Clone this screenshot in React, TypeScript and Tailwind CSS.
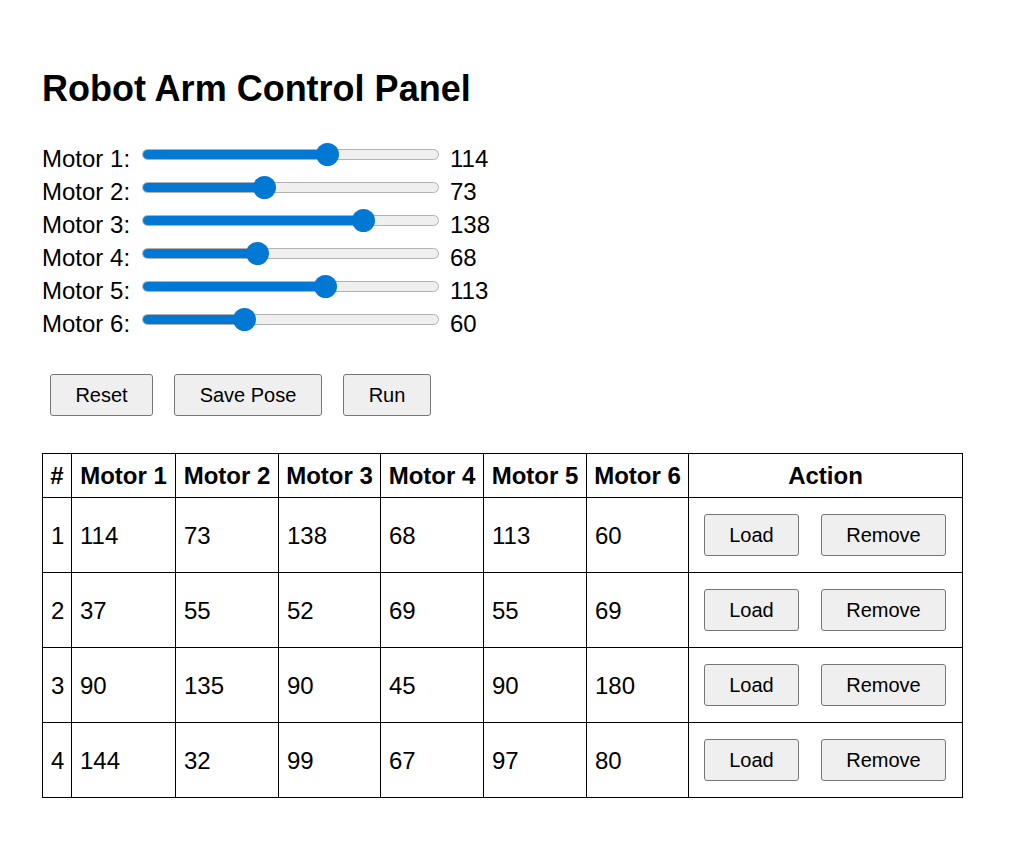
import React from "react";

const motors = [114, 73, 138, 68, 113, 60];
const poses = [
  [114, 73, 138, 68, 113, 60],
  [37, 55, 52, 69, 55, 69],
  [90, 135, 90, 45, 90, 180],
  [144, 32, 99, 67, 97, 80],
];

function Slider({ value }: { value: number }) {
  const frac = value / 180;
  const thumbLeft = frac * (297 - 23);
  return (
    <div className="relative w-[297px] h-[23px] shrink-0">
      <div className="absolute left-0 right-0 top-[6px] h-[11px] rounded-full bg-[#efefef] border border-[#b2b2b2] overflow-hidden">
        <div className="h-full bg-[#0078d4]" style={{ width: thumbLeft + 11 }} />
      </div>
      <div
        className="absolute top-0 w-[23px] h-[23px] rounded-full bg-[#0078d4]"
        style={{ left: thumbLeft }}
      />
    </div>
  );
}

function Btn({ children, w }: { children: React.ReactNode; w: string }) {
  return (
    <button
      className={
        "m-2 h-[42px] text-[20px] leading-[23px] bg-[#efefef] border border-[#767676] rounded-[3px] text-black text-center shrink-0 " +
        w
      }
    >
      {children}
    </button>
  );
}

export default function App() {
  return (
    <div
      className="bg-white text-black min-h-[858px] px-[42px] pt-[68px]"
      style={{ fontFamily: '"Liberation Sans", Arial, sans-serif' }}
    >
      <h1 className="text-[36px] font-bold leading-[41px] m-0">Robot Arm Control Panel</h1>
      <div className="mt-[34px] flex flex-col">
        {motors.map((v, i) => (
          <div key={i} className="flex items-start h-[33px]">
            <span className="text-[24px] leading-[27px] pt-[2px] w-[100px] shrink-0">
              Motor {i + 1}:
            </span>
            <Slider value={v} />
            <span className="text-[24px] leading-[27px] pt-[2px] ml-[11px]">{v}</span>
          </div>
        ))}
      </div>
      <div className="mt-[25px] flex items-center gap-[5px]">
        <Btn w="w-[103px]">Reset</Btn>
        <Btn w="w-[148px]">Save Pose</Btn>
        <Btn w="w-[88px]">Run</Btn>
      </div>
      <table className="mt-[29px] border-collapse text-[24px] table-fixed w-[920px]">
        <colgroup>
          <col className="w-[29px]" />
          <col className="w-[104px]" />
          <col className="w-[103px]" />
          <col className="w-[102px]" />
          <col className="w-[103px]" />
          <col className="w-[103px]" />
          <col className="w-[102px]" />
          <col className="w-[274px]" />
        </colgroup>
        <thead>
          <tr>
            {["#", "Motor 1", "Motor 2", "Motor 3", "Motor 4", "Motor 5", "Motor 6", "Action"].map(
              (h) => (
                <th
                  key={h}
                  className="border border-black py-2 px-0 font-bold text-center leading-[27px] whitespace-nowrap"
                >
                  {h}
                </th>
              )
            )}
          </tr>
        </thead>
        <tbody>
          {poses.map((row, i) => (
            <tr key={i}>
              <td className="border border-black p-2 leading-[27px]">{i + 1}</td>
              {row.map((c, j) => (
                <td key={j} className="border border-black p-2 leading-[27px]">
                  {c}
                </td>
              ))}
              <td className="border border-black py-2 pl-[7px] pr-2">
                <div className="flex items-center gap-[6px]">
                  <Btn w="w-[95px]">Load</Btn>
                  <Btn w="w-[125px]">Remove</Btn>
                </div>
              </td>
            </tr>
          ))}
        </tbody>
      </table>
    </div>
  );
}
